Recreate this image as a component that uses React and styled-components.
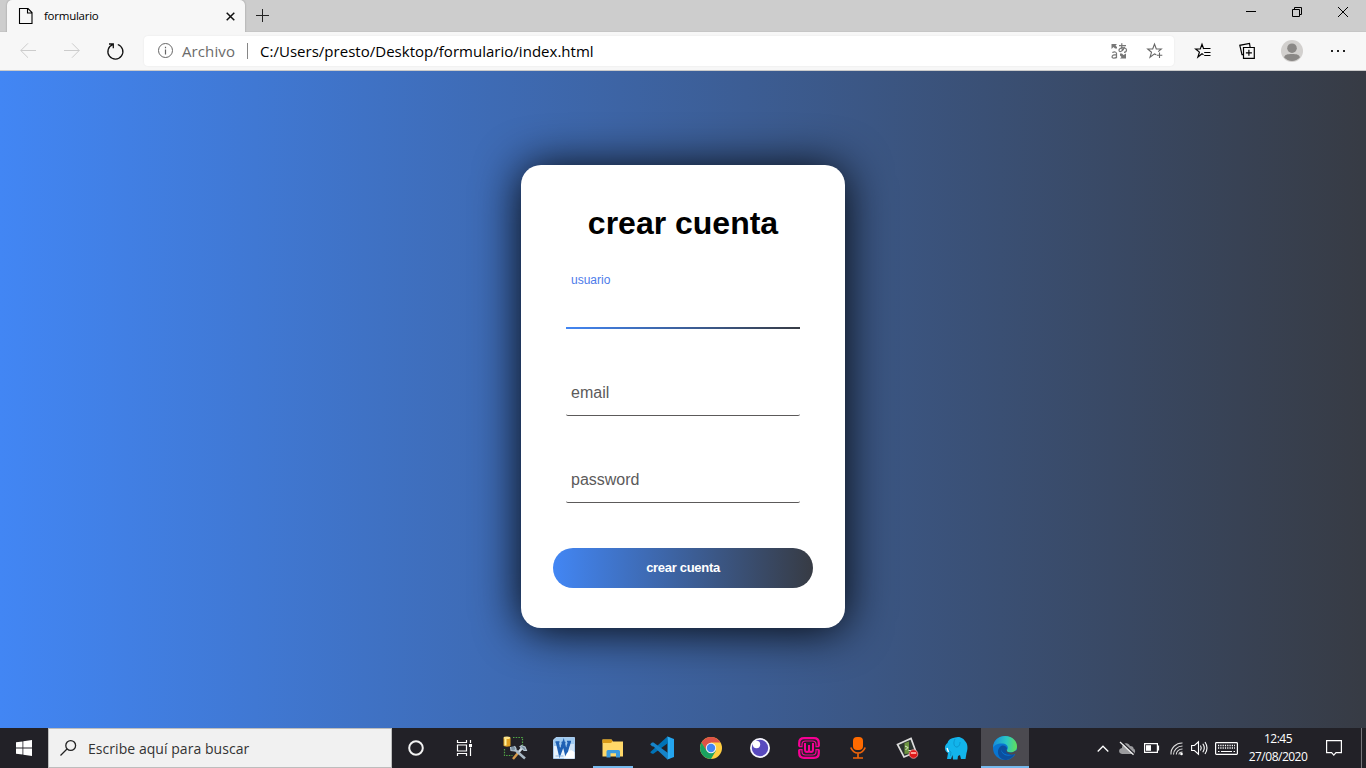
import React from "react";
import styled, { createGlobalStyle } from "styled-components";

const UI = `"Open Sans", "Noto Sans", sans-serif`;

const GlobalStyle = createGlobalStyle`
  *, *::before, *::after { box-sizing: border-box; }
  html, body { margin: 0; padding: 0; overflow: hidden; }
  body { font-family: "Liberation Sans", Arial, sans-serif; }
`;

const Screen = styled.div`
  width: 1366px;
  height: 768px;
  display: flex;
  flex-direction: column;
  overflow: hidden;
`;

const Label = styled.span`
  font-family: ${UI};
  font-size: ${(p) => p.$size}px;
  letter-spacing: ${(p) => p.$track || 0}px;
  color: ${(p) => p.$color || "#000"};
  line-height: ${(p) => p.$line || 20}px;
  white-space: nowrap;
`;

const Icon = styled.svg`
  display: block;
  flex: none;
  overflow: visible;
`;

/* Browser chrome */
const TabStrip = styled.div`
  height: 32px;
  flex: none;
  display: flex;
  background: #cdcdcd;
  border-bottom: 1px solid #c6c6c6;
  padding-left: 7px;
`;

const Tab = styled.div`
  width: 238px;
  height: 32px;
  display: flex;
  align-items: center;
  padding: 0 10px 0 12px;
  background: #f7f7f7;
  border-radius: 5px 5px 0 0;
  box-shadow: 0 0 2px rgba(0, 0, 0, 0.3);
  clip-path: inset(0 -3px 0 -3px);
`;

const TabTitle = styled(Label)`
  flex: 1;
  margin-left: 11px;
`;

const NewTab = styled.div`
  display: flex;
  align-items: center;
  padding-left: 11px;
  height: 31px;
`;

const WindowButtons = styled.div`
  margin-left: auto;
  display: flex;
  height: 23px;
`;

const WindowButton = styled.div`
  width: 46px;
  display: flex;
  align-items: center;
  justify-content: center;
`;

const Toolbar = styled.div`
  height: 39px;
  flex: none;
  display: flex;
  align-items: center;
  background: #f7f7f7;
  border-bottom: 1px solid #cbcbcb;
`;

const ToolButton = styled.div`
  width: ${(p) => p.$w || 44}px;
  display: flex;
  justify-content: center;
`;

const NavGroup = styled.div`
  display: flex;
  width: 144px;
  padding-left: 6px;
`;

const AddressBar = styled.div`
  width: 1030px;
  height: 30px;
  display: flex;
  align-items: center;
  padding: 0 11px 0 13px;
  background: #fff;
  border-radius: 4px;
  box-shadow: 0 0 2px rgba(0, 0, 0, 0.08);
`;

const Scheme = styled(Label)`
  width: 54px;
  margin-left: 9px;
`;

const Divider = styled.i`
  width: 1px;
  height: 16px;
  margin: 0 12px 0 11px;
  background: #868686;
`;

const Url = styled(Label)`
  flex: 1;
`;

const AddressActions = styled.div`
  display: flex;
  gap: 20px;
`;

const ToolActions = styled.div`
  display: flex;
  align-items: center;
  padding-left: 7px;
`;

/* Page */
const Page = styled.main`
  height: 657px;
  flex: none;
  display: flex;
  justify-content: center;
  align-items: flex-start;
  padding-top: 94px;
  background: linear-gradient(to right, #4286f4, #373b44);
  overflow: hidden;
`;

const Form = styled.form`
  width: 324px;
  height: 463px;
  padding: 40px 32px;
  background: #fff;
  border-radius: 20px;
  box-shadow: 0 2px 46px rgba(0, 0, 0, 0.96);
`;

const Title = styled.h1`
  margin: 0;
  font-size: 32px;
  line-height: 37px;
  text-align: center;
  color: #000;
`;

const Fields = styled.div`
  display: flex;
  flex-direction: column;
  gap: 45px;
  padding: 45px 13px 0;
`;

const Field = styled.label`
  display: block;
  height: 42px;
  padding-left: 5px;
  border-bottom: ${(p) => (p.$active ? "2px solid transparent" : "1px solid #5c5a5a")};
  border-image: ${(p) => (p.$active ? "linear-gradient(to right, #4286f4, #373b44) 1" : "none")};
  border-radius: 2px;
`;

const FieldName = styled.span`
  display: block;
  padding-top: ${(p) => (p.$active ? 0 : 9)}px;
  margin-top: ${(p) => (p.$active ? -14 : 0)}px;
  font-size: ${(p) => (p.$active ? 12 : 16)}px;
  line-height: ${(p) => (p.$active ? 14 : 20)}px;
  color: ${(p) => (p.$active ? "#4d7bea" : "#5c5a5a")};
`;

const Submit = styled.button`
  display: block;
  width: 260px;
  height: 40px;
  margin-top: 45px;
  padding: 0 0 2px;
  border: 0;
  border-radius: 20px;
  background: linear-gradient(to right, #4286f4, #373b44);
  color: #fff;
  font: bold 13px "Liberation Sans", Arial, sans-serif;
  letter-spacing: -0.3px;
`;

/* Taskbar */
const Taskbar = styled.footer`
  height: 40px;
  flex: none;
  display: flex;
  background: #222127;
`;

const TaskCell = styled.div`
  width: 48px;
  height: 40px;
  display: flex;
  align-items: center;
  justify-content: center;
  background: ${(p) => (p.$active ? "#4b4a50" : "transparent")};
  box-shadow: ${(p) => (p.$active ? "inset 0 -2px #76b9ed" : "none")};
`;

const OpenMark = styled(TaskCell)`
  width: 40px;
  margin: 0 4px;
  box-shadow: inset 0 -2px #76b9ed;
`;

const Search = styled.div`
  width: 344px;
  display: flex;
  align-items: center;
  gap: 12px;
  padding-left: 11px;
  background: #f1f1f1;
  border: 1px solid #bdbdbd;
`;

const SearchHint = styled(Label)`
  padding-top: 1px;
`;

const Apps = styled.div`
  display: flex;
  gap: 1px;
  margin-left: 3px;
`;

const Tray = styled.div`
  margin-left: auto;
  display: flex;
  align-items: center;
`;

const TrayIcons = styled.div`
  display: flex;
  align-items: center;
`;

const TrayItem = styled.div`
  width: ${(p) => p.$w}px;
  display: flex;
  justify-content: center;
`;

const Clock = styled.div`
  width: 72px;
  display: flex;
  flex-direction: column;
  align-items: center;
`;

const DesktopEdge = styled.i`
  width: 5px;
  height: 40px;
  margin-left: 8px;
  border-left: 1px solid #77767b;
`;

const Svg = ({ w = 24, h = w, children, ...rest }) => (
  <Icon width={w} height={h} viewBox={`0 0 ${w} ${h}`} fill="none" {...rest}>{children}</Icon>
);

const PageIcon = () => (
  <Svg w={14} h={16}><path d="M.5.5H9l4 4v11H.5zM8.5.5v4.500H13" stroke="#000" strokeWidth="1.100" /></Svg>
);
const Arrow = ({ flip }) => (
  <Svg w={16} transform={flip ? "scale(-1 1)" : undefined}>
    <path d="M16 7.500H.8M8 .3.8 7.500 8 14.700" stroke="#ccc" strokeWidth="1" />
  </Svg>
);
const Reload = () => (
  <Svg w={18} h={17}><path d="M2 1h4.300v4.300M5.700 1.600A7.500 7.500 0 1 0 10.800 1.500" stroke="#111" strokeWidth="1.300" /></Svg>
);
const Info = () => (
  <Svg w={16}><circle cx="8.500" cy="7.500" r="7" stroke="#666" /><path d="M8.500 6.500v5M8.500 3.700v1.500" stroke="#666" strokeWidth="1.200" /></Svg>
);
const Translate = () => (
  <Svg w={16} h={16}>
    <path d="M.5 1h5.500L4.500 2.500 6 4v1.500H4L2.500 4 .5 6zM15 15.500H9l1.500-1.500L9 12.500v-2h2l1.500 1.500 2.500-1.500z" fill="#777" />
    <path d="M1.300 9.500q3.700-1.500 4.200.9v4.800M5.500 11.700C0 11.500.3 15.200 2.700 15.200q2.300 0 2.800-1.500M8 2.700h7M10.800.3c-.5 4 .2 6 1 7.700M13.500 3.800C12.200 8.700 8 9.700 8 7.300c0-2.800 7.500-3.600 7.500-.4 0 1.500-1.200 2.200-2.500 2.400" stroke="#777" strokeWidth="1.200" />
  </Svg>
);
const StarAdd = () => (
  <Svg w={16}>
    <path d="M9.300 11.800 7.500 10.900 3 14.300l1.500-5L.7 6h5l1.800-5 1.800 5h5l-3.100 2.700M12.500 9.500v5.500M9.800 12.300h5.500" stroke="#666" strokeWidth="1.100" />
  </Svg>
);
const Favorites = () => (
  <Svg w={16}>
    <path d="M8.500 11.700 7 10.800 2.900 14l1.500-4.900L.7 6h4.600L7 1.200 8.700 6M8.700 5.500h6.800M9.200 9.500h6.300M9.200 12.500h6.300" stroke="#000" strokeWidth="1.200" />
  </Svg>
);
const Collections = () => (
  <Svg w={16}>
    <path d="M4.500 4.500h10.800v10.800H4.500zM9.900 6.800v6M6.900 9.900h6M4.300 11.700H3L.8 2.300 10.500.5l.6 3.500" stroke="#000" strokeWidth="1.200" />
  </Svg>
);
const Avatar = () => (
  <Svg w={22}>
    <circle cx="11" cy="11" r="11" fill="#d2d0ce" /><circle cx="11" cy="8.200" r="4.800" fill="#8a8886" />
    <path d="M3 17.300C4 14.500 6 13.900 11 13.900s7 .6 8 3.400A10.500 10.500 0 0 1 3 17.300z" fill="#8a8886" />
  </Svg>
);
const More = () => (
  <Svg w={16} h={4}><path d="M1 1h2v2H1zM7 1h2v2H7zM13 1h2v2h-2z" fill="#222" /></Svg>
);

const Windows = () => (
  <Svg w={16}><path d="M0 2.300 6.500 1.400v6.200H0zM7.300 1.300 16 0v7.600H7.300zM0 8.400h6.500v6.200L0 13.700zM7.300 8.400H16V16l-8.700-1.300z" fill="#fff" /></Svg>
);
const Magnifier = () => (
  <Svg w={16}><circle cx="10.700" cy="5.500" r="4.900" stroke="#222" strokeWidth="1.300" /><path d="M7 9 .5 15.500" stroke="#222" strokeWidth="1.300" /></Svg>
);
const Cortana = () => (
  <Svg w={16}><circle cx="8" cy="8" r="6.800" stroke="#f2f2f2" strokeWidth="2" /></Svg>
);
const TaskView = () => (
  <Svg w={17} h={16}>
    <path d="M1.500 0v2.500h9V0M1.500 16v-2.500h9V16M1.500 5h9v6h-9zM14.500 0v3M14.500 7.500V16" stroke="#fff" strokeWidth="1.200" />
    <path d="M13 4h3v3h-3z" fill="#fff" />
  </Svg>
);
const DbTools = () => (
  <Svg w={24}>
    <path d="M10 1.500h9.500v8M1.500 13v6.500h8" stroke="#52a847" strokeWidth="1.200" strokeDasharray="1.500 1.200" />
    <path d="M.5 2v7.500c0 1.500 7 1.500 7 0V2z" fill="#e0a020" /><path d="M2.500 2.500v7" stroke="#fff2a0" strokeWidth="2" /><ellipse cx="4" cy="1.800" rx="3.500" ry="1.300" fill="#ffe58a" />
    <path d="m10 23 5-6" stroke="#d69a4b" strokeWidth="2.500" /><path d="m14.500 17.500 5-6" stroke="#d5e0e8" strokeWidth="2.500" /><path d="m10 12 12 10.500" stroke="#aab9c5" strokeWidth="2.500" />
    <path d="M7.500 11 8 14.500l3.500.5 1.500-2.500-1.500-2.500M17 10.500l4 4 2.500 0-1.500-3.500-3.500-1.500z" stroke="#b7c8d4" strokeWidth="1.100" fill="#7c91a2" />
  </Svg>
);
const Word = () => (
  <Svg w={22}>
    <path d="M3 .5h18.500v21H.5V3z" fill="#e9f3fc" stroke="#a9cbed" />
    <path d="M3 1h18v8H1V3z" fill="#9fcaf0" /><path d="M17 7h4v8h-4z" fill="#cfe4f7" />
    <path d="m4.200 5 2.600 11L10.500 6l2.500 10L16.500 4.500" stroke="#1f61b4" strokeWidth="3" />
    <path d="M2.500 5h4M8.500 5.500h4M14 4.500h4" stroke="#1f61b4" strokeWidth="1.500" />
    <path d="m14 16 4-3 3.500 2v6.500H11z" fill="#fff" /><path d="M2.500 19h8" stroke="#8fb9e5" />
  </Svg>
);
const Explorer = () => (
  <Svg w={22} h={20}>
    <path d="M.5 1.500h9l1.500 2h10v15H.5z" fill="#ffd869" /><path d="M.5 1.500h9l1 2-1.500 1.500H.5z" fill="#d99a18" />
    <path d="M4.500 19.500v-6q0-1.500 1.500-1.500h10.500q1.500 0 1.500 1.500v6h-4v-4.200H8.500v4.200z" fill="#3c9bdd" />
  </Svg>
);
const VsCode = () => (
  <Svg w={24}>
    <path d="M17.500.5 24 3v18l-6.500 2.500z" fill="#24a4ee" /><path d="M17.500.5 2 14.500.2 16.300l1.800 1.500h1.500L18 7z" fill="#0073b7" />
    <path d="m17.500 23.500-14-13L2 10.300.2 8.200 2 6.500h1.500L18 17z" fill="#1684c9" /><path d="M17.500.5 18 7v10l-.5 6.500L20 22V2z" fill="#2baef5" />
  </Svg>
);
const Chrome = () => (
  <Svg w={22}>
    <circle cx="11" cy="11" r="11" fill="#ffcd40" /><path d="M1.500 5.500A11 11 0 0 1 20.500 5.500H11L6.200 13.700z" fill="#de5246" />
    <path d="M1.500 5.500A11 11 0 0 0 11 22l5-8.500-9.500 0z" fill="#1aa260" /><circle cx="11" cy="11" r="5.200" fill="#f2f2f2" /><circle cx="11" cy="11" r="4.200" fill="#4285f4" />
  </Svg>
);
const Insomnia = () => (
  <Svg w={20}><circle cx="10" cy="10" r="10" fill="#f8f7ff" /><circle cx="10" cy="10" r="8.200" fill="#5849be" /><circle cx="6.500" cy="6.500" r="3.700" fill="#fff" /></Svg>
);
const Wamp = () => (
  <Svg w={22}>
    <path d="M1.200 9.500V6q0-4.800 4.800-4.800h10q4.800 0 4.800 4.800v3.500M1.200 12.500V16q0 4.800 4.800 4.800h10q4.800 0 4.800-4.800v-3.500" stroke="#f70094" strokeWidth="2.200" />
    <path d="M1 9.700h3V7.500Q4 4 7.500 4h7Q18 4 18 7.500v2.200h3M1 12.700h3V14.500Q4 18 7.500 18h7q3.500 0 3.500-3.500v-1.800h3" stroke="#f70094" strokeWidth="1.200" />
    <path d="M7 6v6.500q0 2.500 2 2.500t2-2v-5 5q0 2 2 2t2-2.500V6" stroke="#f70094" strokeWidth="2" />
  </Svg>
);
const Mic = () => (
  <Svg w={16} h={22}><rect x="3" width="10" height="13" rx="4" fill="#ff6a00" /><path d="M.8 10.500Q3 16 8 16t7.200-5.500M8 16v5M3 21h10" stroke="#ee640a" strokeWidth="1.700" /></Svg>
);
const Terminal = () => (
  <Svg w={23} h={22}>
    <path d="m1.500 7.500 13.500-6L20 15 8 20z" fill="#2c3430" stroke="#dedede" strokeWidth="1.700" /><path d="M8.500 6 13 4.500v12L8.500 17z" fill="#6c9440" />
    <path d="m9 9 3 1.500L9.500 13m3 .5h2.500" stroke="#dceccc" /><circle cx="17.500" cy="17" r="4.300" fill="#df1919" stroke="#e8a0a0" strokeWidth=".8" /><path d="M14.800 16h5.400" stroke="#ff9c92" strokeWidth="2" />
  </Svg>
);
const Elephant = () => (
  <Svg w={24}>
    <path d="M3.500 7C5 2 9 2.500 11 1.500 16-.5 20 3 21 5c3 3 3 8 1.500 12l-1 6H17l-1-4-2 1-.5 3.500H9L8.500 19 7 23H3l1-6C0 15 0 9 3.500 7z" fill="#12b4eb" />
    <path d="M11 3c-2 4-1 7 1 8 3 .5 4-3 4-5M4.500 14l2.500 2-.5 4" stroke="#0a8fc6" strokeWidth=".8" /><path d="m3 12 1.500 4" stroke="#fff" strokeWidth="1.400" />
  </Svg>
);
const Edge = () => (
  <Svg w={24}>
    <defs>
      <linearGradient id="edgeTop" x1="0" y1="8" x2="24" y2="10" gradientUnits="userSpaceOnUse"><stop stopColor="#168bdd" /><stop offset=".55" stopColor="#2bc8c3" /><stop offset="1" stopColor="#62df58" /></linearGradient>
    </defs>
    <circle cx="12" cy="12" r="12" fill="#0875d1" />
    <path d="M0 12C0 4 6 0 12 0c8 0 12 5.500 12 10.500 0 4-3 6-6.500 6-3 0-4.300-1.200-3.400-2.600C16 11 14 8 10 7.500 5 7 1 9 0 12z" fill="url(#edgeTop)" />
    <path d="M8 13c0 6 7 9 14 4.500-2 4-6 6.500-10 6.500C7 23 4.500 19 5 15c.3-3 2.500-5.500 5-5.500 2 0 4 1.500 4 3 0 .6-.6 1-.6 1.800 0 1.200 1.500 2.800 4.600 2.500 2.500 0 4-.8 5-1.700l-1 2.400C17 20 9 19 8 13z" fill="#0b4f9e" />
    <path d="M14 13.500c-1 2 1.500 3.500 5 3l5-2.500-.5 4.500-1.500-.5c-4 1.500-8.500-.5-9-3.500z" fill="#4b4a50" />
  </Svg>
);

const apps = [DbTools, Word, Explorer, VsCode, Chrome, Insomnia, Wamp, Mic, Terminal, Elephant, Edge];

const Chevron = () => <Svg w={12} h={7}><path d="m.7 6.500 5.300-5.300 5.300 5.300" stroke="#fff" strokeWidth="1.300" /></Svg>;
const Cloud = () => (
  <Svg w={16} h={13}><path d="M3 12C-.8 11.500-.8 6.500 3 6 3 1.300 9-.8 11 4c2.800 0 3.500 1 3.500 2.500 2.500 1 2 5.500-.5 5.500z" fill="#9b9b9e" /><path d="m2.500-.5 12.500 12" stroke="#222127" strokeWidth="1.200" /><path d="m1 0 13.500 12.800" stroke="#eee" strokeWidth="1.200" /></Svg>
);
const Battery = () => (
  <Svg w={15} h={10}><path d="M.6.600h12.800v8.800H.6zM13.500 3h1v4h-1" stroke="#fff" strokeWidth="1.200" /><path d="M2 2.200h5v5.600H2z" fill="#fff" /></Svg>
);
const Wifi = () => (
  <Svg w={13} h={13}>
    <path d="M1 12.500C.5 6 6 .8 12.500 1M3.500 12.500C3.500 8 7.500 4 12.500 4M6.300 12.500C6.300 9.500 9 7 12.500 7M9 12.500C9 11 10.500 10 12.500 10" stroke="#ddd" strokeWidth="1.100" /><circle cx="11.500" cy="12" r="1.300" fill="#fff" />
  </Svg>
);
const Sound = () => (
  <Svg w={17} h={14}><path d="M.6 4.500h2.800L7.500.8v12.400L3.400 9.500H.6zM9.500 4.500q1.500 2.500 0 5M11.800 2.800q3 4.200 0 8.400M14 1q4 6 0 12" stroke="#fff" strokeWidth="1.100" /></Svg>
);
const Keyboard = () => (
  <Svg w={23} h={13}><rect x=".6" y=".6" width="21.800" height="11.800" rx=".8" stroke="#fff" strokeWidth="1.200" /><path d="M3 3.500h17M3 6h17" stroke="#fff" strokeWidth="1.300" strokeDasharray="1.200 1.100" /><path d="M3 9.500h1.500M6 9.500h11M18.500 9.500H20" stroke="#fff" /></Svg>
);
const Notice = () => <Svg w={16} h={16}><path d="M.6.600h14.800v12H10l-2.200 2.500-2.200-2.500h-5z" stroke="#fff" strokeWidth="1.200" /></Svg>;

export default function App() {
  return (
    <Screen>
      <GlobalStyle />
      <TabStrip>
        <Tab>
          <PageIcon />
          <TabTitle $size={11.5} $track={-0.25}>formulario</TabTitle>
          <Svg w={9}><path d="m.7.700 7.600 7.600m0-7.600L.7 8.300" stroke="#111" strokeWidth="1.500" /></Svg>
        </Tab>
        <NewTab><Svg w={13}><path d="M6.500 0v13M0 6.500h13" stroke="#222" /></Svg></NewTab>
        <WindowButtons>
          <WindowButton><Svg w={10} h={1}><path d="M0 .5h10" stroke="#000" /></Svg></WindowButton>
          <WindowButton><Svg w={10}><path d="M.5 2.500h7v7h-7zM2.500 2.500v-2h7v7h-2" stroke="#000" /></Svg></WindowButton>
          <WindowButton><Svg w={10}><path d="m0 0 10 10M10 0 0 10" stroke="#000" /></Svg></WindowButton>
        </WindowButtons>
      </TabStrip>
      <Toolbar>
        <NavGroup>
          <ToolButton><Arrow /></ToolButton>
          <ToolButton><Arrow flip /></ToolButton>
          <ToolButton><Reload /></ToolButton>
        </NavGroup>
        <AddressBar>
          <Info />
          <Scheme $size={15} $track={0.1} $color="#6b6b6b">Archivo</Scheme>
          <Divider />
          <Url $size={15} $track={0.02}>C:/Users/presto/Desktop/formulario/index.html</Url>
          <AddressActions><Translate /><StarAdd /></AddressActions>
        </AddressBar>
        <ToolActions>
          <ToolButton>
            <Favorites />
          </ToolButton>
          <ToolButton><Collections /></ToolButton>
          <ToolButton $w={46}><Avatar /></ToolButton>
          <ToolButton $w={46}><More /></ToolButton>
        </ToolActions>
      </Toolbar>
      <Page>
        <Form>
          <Title>crear cuenta</Title>
          <Fields>
            <Field $active><FieldName $active>usuario</FieldName></Field>
            <Field><FieldName>email</FieldName></Field>
            <Field><FieldName>password</FieldName></Field>
          </Fields>
          <Submit type="button">crear cuenta</Submit>
        </Form>
      </Page>
      <Taskbar>
        <TaskCell><Windows /></TaskCell>
        <Search>
          <Magnifier />
          <SearchHint $size={14} $track={0.05} $color="#333">Escribe aquí para buscar</SearchHint>
        </Search>
        <TaskCell><Cortana /></TaskCell>
        <TaskCell><TaskView /></TaskCell>
        <Apps>
          {apps.map((App, i) =>
            App === Explorer
              ? <OpenMark key={i}><App /></OpenMark>
              : <TaskCell key={i} $active={App === Edge}><App /></TaskCell>
          )}
        </Apps>
        <Tray>
          <TrayIcons>
            <TrayItem $w={24}><Chevron /></TrayItem>
            <TrayItem $w={24}><Cloud /></TrayItem>
            <TrayItem $w={25}><Battery /></TrayItem>
            <TrayItem $w={24}><Wifi /></TrayItem>
            <TrayItem $w={22}><Sound /></TrayItem>
            <TrayItem $w={32}><Keyboard /></TrayItem>
          </TrayIcons>
          <Clock>
            <Label $size={12} $line={18} $track={-0.5} $color="#fff">12:45</Label>
            <Label $size={12} $line={18} $track={-0.5} $color="#fff">27/08/2020</Label>
          </Clock>
          <TrayItem $w={39}><Notice /></TrayItem>
          <DesktopEdge />
        </Tray>
      </Taskbar>
    </Screen>
  );
}
